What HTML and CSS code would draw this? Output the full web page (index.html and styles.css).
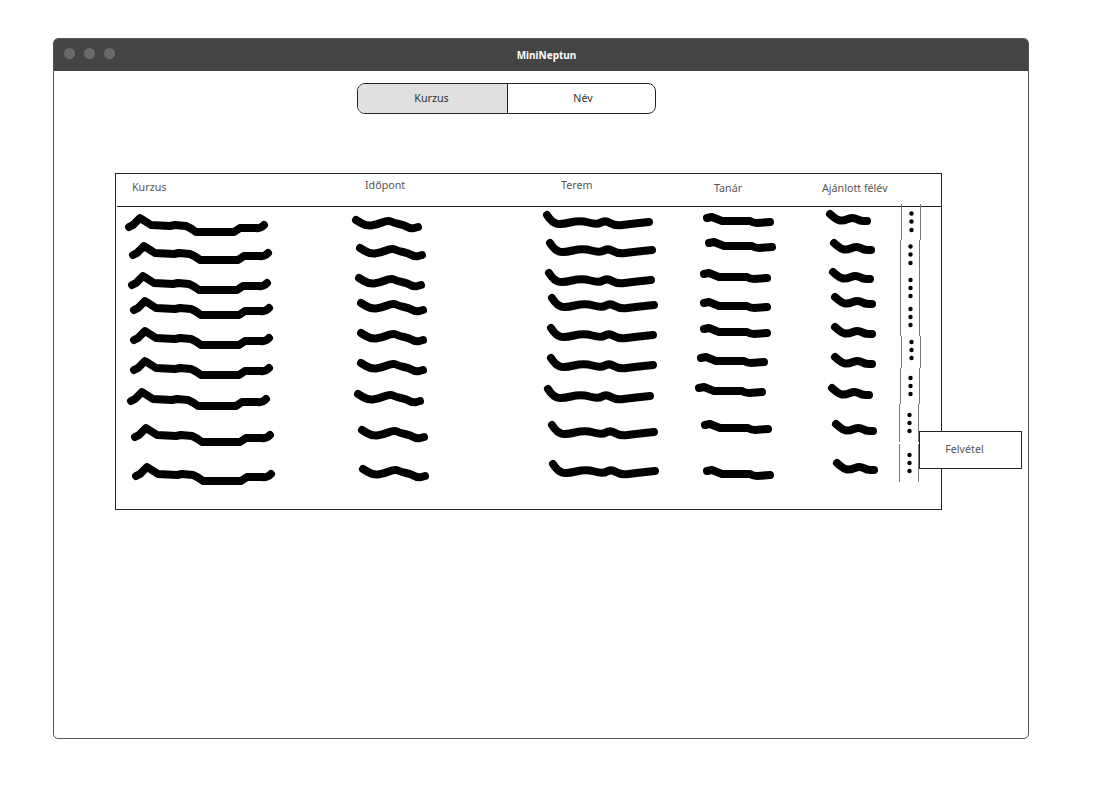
FILE: index.html
```html
<!DOCTYPE html>
<html lang="en">
<head>
    <meta charset="UTF-8">
    <meta name="viewport" content="width=device-width, initial-scale=1.0">
    <title>MiniNeptun</title>
    <link rel="stylesheet" href="styles.css">
</head>
<body>
    <div class="window">
        <div class="titlebar">
            <div class="lights">
                <span class="light"></span>
                <span class="light"></span>
                <span class="light"></span>
            </div>
            <div class="title">MiniNeptun</div>
        </div>

        <div class="content">
            <div class="toggle">
                <div class="toggle-item active">Kurzus</div>
                <div class="toggle-item">Név</div>
            </div>

            <div class="panel">
                <div class="head">
                    <div class="col col-kurzus">Kurzus</div>
                    <div class="col col-idopont">Időpont</div>
                    <div class="col col-terem">Terem</div>
                    <div class="col col-tanar">Tanár</div>
                    <div class="col col-felev">Ajánlott félév</div>
                </div>

                <!-- hand drawn rows, coordinates are page pixels -->
                <svg class="sketch" viewBox="116 174 825 335" width="825" height="335">
                    <defs>
                        <path id="s-kurzus" d="M0 0L4 -2L11 -9L22 -2L41 -1L46 -2L57 -1Q62 1 67 5L105 5L111 1L127 1Q131 2 135 -2"/>
                        <path id="s-idopont" d="M0 0L5 3Q10 6 15 5.5Q20 5 26 2.5Q32 0 35 1.5Q38 3 43 4Q48 5 51.5 7Q55 9 58.5 8L62 7"/>
                        <path id="s-terem" d="M0 0L2.5 3.5Q5 7 9 8.5Q13 10 23 7.5Q33 5 41.5 7.5Q50 10 54 7.5Q58 5 63 8Q68 11 75.5 10Q83 9 92.5 8L102 7"/>
                        <path id="s-tanar" d="M0 0L5 -1L15 3L43 3Q46 5 50 5L63 4"/>
                        <path id="s-felev" d="M0 0L3.5 3Q7 6 10 6.5Q13 7 18 5Q23 3 26.5 5Q30 7 33.5 7L37 7"/>
                    </defs>

                    <g class="marks">
                        <use href="#s-kurzus" x="129" y="227"/>
                        <use href="#s-kurzus" x="133" y="255"/>
                        <use href="#s-kurzus" x="132" y="285"/>
                        <use href="#s-kurzus" x="134" y="310"/>
                        <use href="#s-kurzus" x="134" y="340"/>
                        <use href="#s-kurzus" x="134" y="370"/>
                        <use href="#s-kurzus" x="131" y="401"/>
                        <use href="#s-kurzus" x="135" y="437"/>
                        <use href="#s-kurzus" x="136" y="476"/>

                        <use href="#s-idopont" x="356" y="220"/>
                        <use href="#s-idopont" x="360" y="248"/>
                        <use href="#s-idopont" x="359" y="278"/>
                        <use href="#s-idopont" x="361" y="303"/>
                        <use href="#s-idopont" x="361" y="333"/>
                        <use href="#s-idopont" x="361" y="363"/>
                        <use href="#s-idopont" x="358" y="394"/>
                        <use href="#s-idopont" x="362" y="430"/>
                        <use href="#s-idopont" x="363" y="469"/>

                        <use href="#s-terem" x="547" y="215"/>
                        <use href="#s-terem" x="550" y="243"/>
                        <use href="#s-terem" x="549" y="273"/>
                        <use href="#s-terem" x="552" y="298"/>
                        <use href="#s-terem" x="551" y="328"/>
                        <use href="#s-terem" x="551" y="358"/>
                        <use href="#s-terem" x="548" y="389"/>
                        <use href="#s-terem" x="552" y="425"/>
                        <use href="#s-terem" x="553" y="464"/>

                        <use href="#s-tanar" x="707" y="218"/>
                        <use href="#s-tanar" x="709" y="243"/>
                        <use href="#s-tanar" x="704" y="274"/>
                        <use href="#s-tanar" x="704" y="303"/>
                        <use href="#s-tanar" x="704" y="329"/>
                        <use href="#s-tanar" x="701" y="358"/>
                        <use href="#s-tanar" x="699" y="388"/>
                        <use href="#s-tanar" x="705" y="425"/>
                        <use href="#s-tanar" x="707" y="471"/>

                        <use href="#s-felev" x="830" y="214"/>
                        <use href="#s-felev" x="834" y="243"/>
                        <use href="#s-felev" x="833" y="272"/>
                        <use href="#s-felev" x="835" y="297"/>
                        <use href="#s-felev" x="835" y="327"/>
                        <use href="#s-felev" x="835" y="357"/>
                        <use href="#s-felev" x="832" y="388"/>
                        <use href="#s-felev" x="836" y="424"/>
                        <use href="#s-felev" x="837" y="463"/>
                    </g>

                    <g class="rules">
                        <path d="M901.5 204V240M920.5 204V240"/>
                        <path d="M900.5 240V336M919.5 240V336"/>
                        <path d="M901.5 336V368M920.5 336V368"/>
                        <path d="M900.5 368V404M919.5 368V404"/>
                        <path d="M899.5 404V442M918.5 404V442"/>
                        <path d="M899.5 444V482M918.5 444V482"/>
                    </g>

                    <g class="dots">
                        <circle cx="911.5" cy="213.5" r="2.2"/><circle cx="911.5" cy="221.5" r="2.2"/><circle cx="911.5" cy="230" r="2.2"/>
                        <circle cx="910.5" cy="246.5" r="2.2"/><circle cx="910.5" cy="254.5" r="2.2"/><circle cx="910.5" cy="263" r="2.2"/>
                        <circle cx="910.5" cy="280" r="2.2"/><circle cx="910.5" cy="288" r="2.2"/><circle cx="910.5" cy="296" r="2.2"/>
                        <circle cx="910.5" cy="309" r="2.2"/><circle cx="910.5" cy="317" r="2.2"/><circle cx="910.5" cy="325" r="2.2"/>
                        <circle cx="911.5" cy="342" r="2.2"/><circle cx="911.5" cy="350" r="2.2"/><circle cx="911.5" cy="358" r="2.2"/>
                        <circle cx="910.5" cy="378" r="2.2"/><circle cx="910.5" cy="386" r="2.2"/><circle cx="910.5" cy="394" r="2.2"/>
                        <circle cx="909.5" cy="415" r="2.2"/><circle cx="909.5" cy="423" r="2.2"/><circle cx="909.5" cy="431" r="2.2"/>
                        <circle cx="909.5" cy="455" r="2.2"/><circle cx="909.5" cy="463" r="2.2"/><circle cx="909.5" cy="471" r="2.2"/>
                    </g>
                </svg>

                <div class="popup">Felvétel</div>
            </div>
        </div>
    </div>
</body>
</html>
```

FILE: styles.css
```css
* {
    margin: 0;
    padding: 0;
    box-sizing: border-box;
}

body {
    background: #fff;
    font-family: "Noto Sans", "Open Sans", sans-serif;
    font-size: 10.7px;
    color: #444;
    overflow: hidden;
    height: 785px;
    padding: 38px 0 0 53px;
}

.window {
    width: 976px;
    height: 701px;
    border: 1px solid #555;
    border-radius: 5px;
    overflow: hidden;
    display: flex;
    flex-direction: column;
}

.titlebar {
    position: relative;
    height: 32px;
    background: #444;
    display: flex;
    align-items: center;
    justify-content: center;
    flex: none;
}

.lights {
    position: absolute;
    left: 10px;
    top: 9px;
    display: flex;
    gap: 9px;
}

.light {
    width: 11px;
    height: 11px;
    border-radius: 50%;
    background: #6a6a6a;
}

.title {
    color: #fff;
    font-weight: 700;
    font-size: 10px;
    margin: -1px 0 0 11px;
}

.content {
    flex: 1;
    padding: 12px 0 0 61px;
}

.toggle {
    display: flex;
    width: 299px;
    height: 31px;
    margin-left: 242px;
    border: 1px solid #222;
    border-radius: 8px;
    overflow: hidden;
}

.toggle-item {
    flex: 1;
    display: flex;
    align-items: center;
    justify-content: center;
    padding: 0 0 2px 3px;
    color: #333;
}

.toggle-item.active {
    flex: none;
    width: 150px;
    padding: 0 2px 2px 0;
    background: #e0e0e0;
    border-right: 1px solid #222;
}

.panel {
    position: relative;
    width: 827px;
    height: 337px;
    margin-top: 59px;
    border: 1px solid #222;
}

.head {
    display: flex;
    height: 33px;
    margin: 0 -1px 0 1px;
    border-bottom: 1px solid #222;
    color: #555;
}

.col {
    flex: none;
    white-space: nowrap;
    line-height: 15px;
}

.col-kurzus { width: 248px; padding: 6px 0 0 15px; }
.col-idopont { width: 196px; padding-top: 4px; }
.col-terem { width: 153px; padding-top: 4px; }
.col-tanar { width: 108px; padding-top: 7px; }
.col-felev { padding-top: 7px; }

.sketch {
    position: absolute;
    left: 0;
    top: 0;
    overflow: visible;
}

.marks {
    fill: none;
    stroke: #000;
    stroke-width: 8;
    stroke-linecap: round;
    stroke-linejoin: round;
}

.rules {
    fill: none;
    stroke: #777;
    stroke-width: 1;
}

.dots {
    fill: #000;
}

.popup {
    position: absolute;
    left: 803px;
    top: 257px;
    width: 103px;
    height: 38px;
    border: 1px solid #222;
    background: #fff;
    display: flex;
    align-items: center;
    justify-content: center;
    padding: 0 12px 2px 0;
    color: #555;
}
```
